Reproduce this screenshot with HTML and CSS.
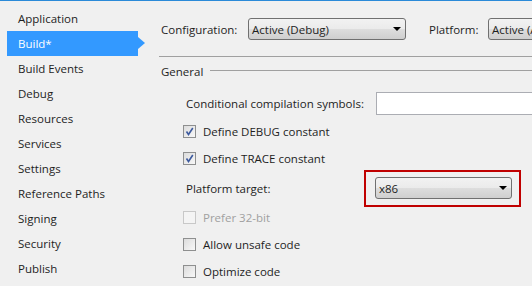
FILE: index.html
```html
<!DOCTYPE html>
<html>
<head>
<meta charset="utf-8">
<link rel="stylesheet" href="styles.css">
</head>
<body>
<div class="app">
  <nav class="side">
    <div class="item">Application</div>
    <div class="item active">Build*</div>
    <div class="item">Build Events</div>
    <div class="item">Debug</div>
    <div class="item">Resources</div>
    <div class="item">Services</div>
    <div class="item">Settings</div>
    <div class="item">Reference Paths</div>
    <div class="item">Signing</div>
    <div class="item">Security</div>
    <div class="item">Publish</div>
  </nav>
  <main class="main">
    <div class="toolbar">
      <span class="tb-label">Configuration:</span>
      <div class="combo combo-config"><span class="combo-text">Active (Debug)</span><span class="caret"></span></div>
      <span class="tb-label tb-platform">Platform:</span>
      <div class="combo combo-platform"><span class="combo-text">Active (Any CPU)</span><span class="caret"></span></div>
    </div>
    <div class="sep"></div>
    <div class="group-title"><span>General</span><span class="rule"></span></div>
    <div class="settings">
      <div class="row row-input">
        <span class="field-label">Conditional compilation symbols:</span>
        <div class="textbox"></div>
      </div>
      <div class="row row-check">
        <span class="cb checked"><svg viewBox="0 0 13 13" width="13" height="13"><path d="M3.5 6.5 L5.5 9.5 L9.8 3" fill="none" stroke="#3d5a9e" stroke-width="1.6"/></svg></span>
        <span>Define DEBUG constant</span>
      </div>
      <div class="row row-check">
        <span class="cb checked"><svg viewBox="0 0 13 13" width="13" height="13"><path d="M3.5 6.5 L5.5 9.5 L9.8 3" fill="none" stroke="#3d5a9e" stroke-width="1.6"/></svg></span>
        <span>Define TRACE constant</span>
      </div>
      <div class="row row-platform">
        <span class="field-label">Platform target:</span>
        <div class="highlight">
          <div class="combo combo-target"><span class="combo-text">x86</span><span class="caret"></span></div>
        </div>
      </div>
      <div class="row row-check disabled">
        <span class="cb"></span>
        <span>Prefer 32-bit</span>
      </div>
      <div class="row row-check">
        <span class="cb"></span>
        <span>Allow unsafe code</span>
      </div>
      <div class="row row-check">
        <span class="cb"></span>
        <span>Optimize code</span>
      </div>
    </div>
  </main>
</div>
</body>
</html>
```

FILE: styles.css
```css
html, body {
  margin: 0;
  padding: 0;
  background: #f0f0f0;
}
body {
  font-family: "Open Sans", "Noto Sans", sans-serif;
  font-size: 11.5px;
  color: #1e1e1e;
  width: 532px;
  height: 286px;
  overflow: hidden;
}
.app {
  display: flex;
  border-top: 1px solid #2a8ad8;
  height: 285px;
}
.side {
  width: 159px;
  flex: none;
  padding-top: 5px;
}
.item {
  height: 25px;
  line-height: 25px;
  margin-left: 7px;
  width: 131px;
  padding-left: 11px;
  box-sizing: border-box;
  white-space: nowrap;
}
.item.active {
  background: #3399ff;
  color: #fff;
  position: relative;
}
.item.active::after {
  content: "";
  position: absolute;
  left: 131px;
  top: 6px;
  border-left: 7px solid #3399ff;
  border-top: 6px solid transparent;
  border-bottom: 6px solid transparent;
}
.main {
  flex: 1;
  min-width: 0;
  overflow: hidden;
}
.toolbar {
  display: flex;
  align-items: center;
  padding-top: 17px;
  padding-left: 2px;
  height: 22px;
  white-space: nowrap;
}
.tb-label {
  width: 87px;
  flex: none;
}
.tb-platform {
  margin-left: 23px;
  width: 59px;
}
.combo {
  height: 22px;
  box-sizing: border-box;
  border: 1px solid #707070;
  border-radius: 3px;
  background: linear-gradient(#f2f2f2 0%, #ebebeb 48%, #dddddd 52%, #cfcfcf 100%);
  display: flex;
  align-items: center;
  padding-left: 3px;
  position: relative;
  flex: none;
}
.combo-config { width: 158px; }
.combo-platform { width: 120px; }
.combo-target { width: 137px; }
.combo-text { flex: 1; white-space: nowrap; }
.caret {
  width: 0;
  height: 0;
  border-left: 4px solid transparent;
  border-right: 4px solid transparent;
  border-top: 4px solid #000;
  margin-right: 4px;
}
.sep {
  height: 1px;
  background: #a0a0a0;
  margin-top: 16px;
}
.group-title {
  display: flex;
  align-items: center;
  height: 18px;
  margin-top: 5px;
  padding-left: 2px;
}
.group-title .rule {
  flex: 1;
  height: 1px;
  background: #a0a0a0;
  margin-left: 7px;
  margin-top: -1px;
}
.settings {
  padding-left: 24px;
  margin-top: 12px;
}
.row {
  display: flex;
  align-items: center;
  white-space: nowrap;
}
.row-input { height: 23px; margin-bottom: 3px; padding-left: 3px; }
.row-check { height: 27px; }
.row-platform { height: 32px; padding-left: 3px; }
.field-label {
  width: 190px;
  flex: none;
}
.textbox {
  flex: 1;
  height: 23px;
  box-sizing: border-box;
  background: #fff;
  border: 1px solid #abadb3;
  border-right: none;
}
.highlight {
  margin-left: -12px;
  border: 2px solid #c00000;
  padding: 5px 7px 6px 9px;
  margin-top: -2px;
  margin-bottom: -3px;
}
.cb {
  width: 13px;
  height: 13px;
  box-sizing: border-box;
  border: 1px solid #8e8f8f;
  background: linear-gradient(135deg, #dcdcdc, #f8f8f8);
  margin-right: 7px;
  flex: none;
  display: flex;
}
.cb svg { margin: -1px; }
.disabled { color: #a0a0a0; }
.disabled .cb {
  border-color: #c8c8c8;
  background: #f4f4f4;
}
```
